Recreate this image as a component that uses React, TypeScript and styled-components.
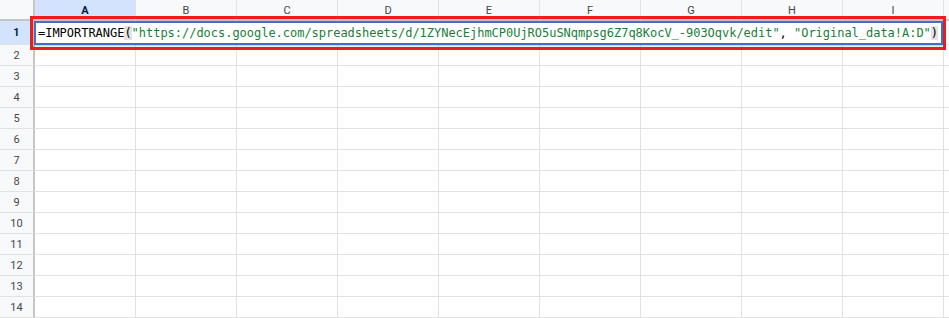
import React from 'react';
import styled, { createGlobalStyle } from 'styled-components';

const columns = ['A', 'B', 'C', 'D', 'E', 'F', 'G', 'H', 'I', ''];
const rows = Array.from({ length: 14 }, (_, i) => i + 1);

const GlobalStyle = createGlobalStyle`
  html, body {
    margin: 0;
    padding: 0;
    background: #ffffff;
    overflow: hidden;
  }
`;

const Sheet = styled.div`
  position: relative;
  width: 949px;
  height: 318px;
  overflow: hidden;
  font-family: Roboto, 'Liberation Sans', Arial, sans-serif;
`;

const Grid = styled.div`
  display: grid;
  grid-template-columns: 35px repeat(9, 101px) 101px;
  grid-template-rows: 21px 24px repeat(13, 21px);
`;

const Corner = styled.div`
  background: #f8f9fa;
  border-right: 2px solid #c4c7c5;
  border-bottom: 2px solid #c4c7c5;
  box-sizing: border-box;
`;

const ColHeader = styled.div<{ $active?: boolean }>`
  display: flex;
  align-items: center;
  justify-content: center;
  box-sizing: border-box;
  background: ${(p) => (p.$active ? '#d3e3fd' : '#f8f9fa')};
  border-right: 1px solid #e1e3e1;
  border-bottom: 2px solid #c4c7c5;
  font-size: 11px;
  font-weight: ${(p) => (p.$active ? 700 : 400)};
  color: ${(p) => (p.$active ? '#041e49' : '#444746')};
  padding-top: 1px;
`;

const RowHeader = styled.div<{ $active?: boolean }>`
  display: flex;
  align-items: center;
  justify-content: center;
  box-sizing: border-box;
  background: ${(p) => (p.$active ? '#d3e3fd' : '#f8f9fa')};
  border-right: 2px solid #c4c7c5;
  border-bottom: 1px solid #e1e3e1;
  font-size: 11px;
  font-weight: ${(p) => (p.$active ? 700 : 400)};
  color: ${(p) => (p.$active ? '#041e49' : '#444746')};
`;

const Cell = styled.div`
  box-sizing: border-box;
  border-right: 1px solid #e1e3e1;
  border-bottom: 1px solid #e1e3e1;
  background: #ffffff;
`;

// red annotation frame drawn over the edited cell
const Highlight = styled.div`
  position: absolute;
  left: 30px;
  top: 16px;
  width: 916px;
  height: 34px;
  box-sizing: border-box;
  border: 3px solid #ee1c1c;
  pointer-events: none;
`;

const Editor = styled.div`
  position: absolute;
  left: 34px;
  top: 21px;
  width: 909px;
  height: 24px;
  box-sizing: border-box;
  border: 2px solid #3f6fd0;
  background: #ffffff;
  box-shadow: 0 1px 2px rgba(60, 64, 67, 0.3);
  display: flex;
  align-items: center;
  padding-left: 2px;
  font-family: 'DejaVu Sans Mono', 'Liberation Mono', monospace;
  font-size: 12px;
  letter-spacing: -0.025px;
  white-space: nowrap;
  color: #000000;
`;

const Str = styled.span`
  color: #188038;
`;

const Paren = styled.span`
  background: #e3e3e3;
`;

const App = () => {
  return (
    <Sheet>
      <GlobalStyle />
      <Grid>
        <Corner />
        {columns.map((c, i) => (
          <ColHeader key={`h${i}`} $active={c === 'A'}>
            {c}
          </ColHeader>
        ))}
        {rows.map((r) => (
          <React.Fragment key={r}>
            <RowHeader $active={r === 1}>{r}</RowHeader>
            {columns.map((_, i) => (
              <Cell key={i} />
            ))}
          </React.Fragment>
        ))}
      </Grid>
      <Highlight />
      <Editor>
        =IMPORTRANGE<Paren>(</Paren>
        <Str>"https://docs.google.com/spreadsheets/d/1ZYNecEjhmCP0UjRO5uSNqmpsg6Z7q8KocV_-903Oqvk/edit"</Str>
        ,&nbsp;<Str>"Original_data!A:D"</Str>
        <Paren>)</Paren>
      </Editor>
    </Sheet>
  );
};

export default App;
